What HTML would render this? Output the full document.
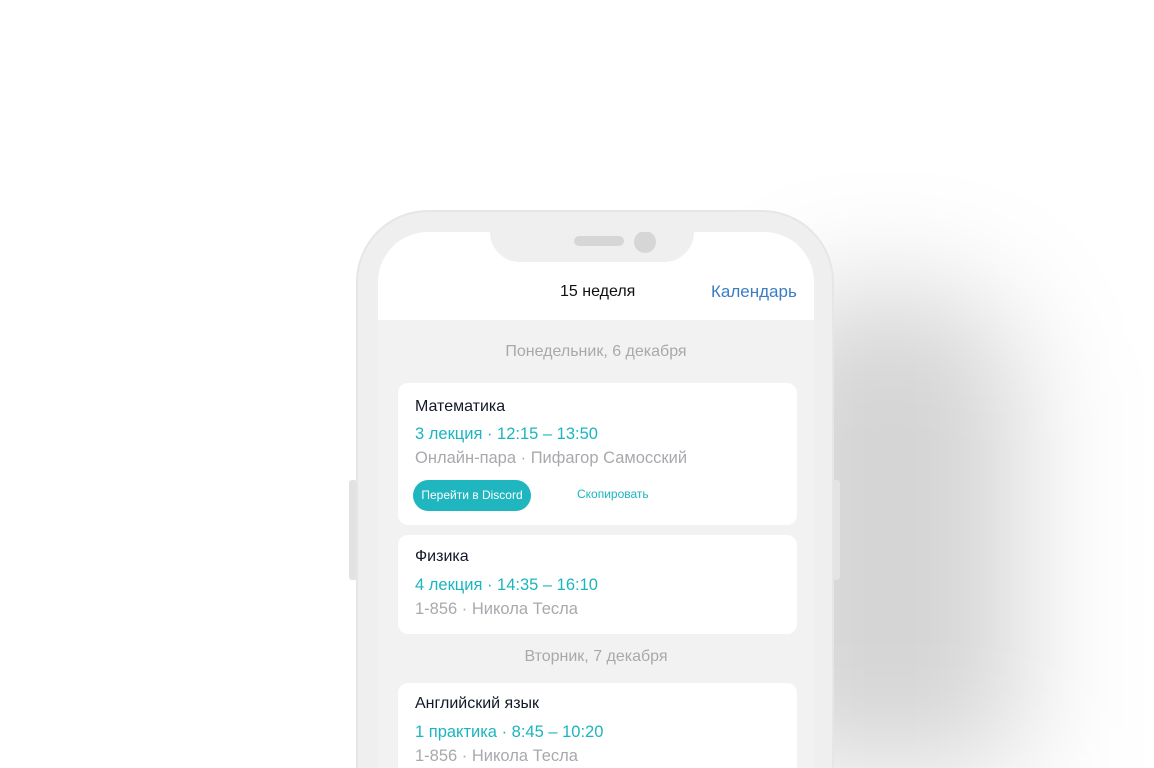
<!DOCTYPE html>
<html><head><meta charset="utf-8"><style>
*{margin:0;padding:0;box-sizing:border-box}
html,body{width:1154px;height:768px;overflow:hidden}
body{background:#fff;position:relative;font-family:"Liberation Sans",sans-serif}
.shadow{position:absolute;left:760px;top:290px;width:260px;height:478px;border-radius:100px 100px 0 0;background:rgba(0,0,0,.17);filter:blur(60px)}
.frame{position:absolute;left:356px;top:210px;width:478px;height:558px;border-radius:72px 72px 0 0;background:#efefef;border:2px solid #e6e6e6;border-bottom:0}
.btnl{position:absolute;left:349px;top:480px;width:8px;height:100px;background:#e2e2e2;border-radius:3px}
.btnr{position:absolute;left:832px;top:480px;width:8px;height:100px;background:#e4e4e4;border-radius:3px}
.screen{position:absolute;left:378px;top:232px;width:436px;height:536px;border-radius:50px 50px 0 0;background:#f2f2f2;overflow:hidden}
.head{position:absolute;left:0;top:0;width:436px;height:88px;background:#fff}
.notch{position:absolute;left:112px;top:-2px;width:204px;height:32px;background:#efefef;border-radius:0 0 30px 30px}
.spk{position:absolute;left:84px;top:6px;width:50px;height:10px;border-radius:5px;background:#d6d6d6}
.cam{position:absolute;left:144px;top:1px;width:22px;height:22px;border-radius:50%;background:#d6d6d6}
.t{position:absolute;white-space:nowrap}
.card{position:absolute;left:20px;width:399px;background:#fff;border-radius:10px}
.n{color:#111827;font-size:16px}
.c{color:#1bb5bf;font-size:16.5px}
.g{color:#a7a9ad;font-size:16.5px}
.d{color:#a7a9ad;font-size:16px;width:436px;text-align:center;left:0}
</style></head><body>
<div class="shadow"></div>
<div class="btnl"></div><div class="btnr"></div>
<div class="frame"></div>
<div class="screen">
 <div class="head">
  <div class="notch"><div class="spk"></div><div class="cam"></div></div>
  <div class="t" style="left:182px;top:51px;font-size:16px;color:#111">15 неделя</div>
  <div class="t" style="left:333px;top:50px;font-size:17px;color:#3b7dc4">Календарь</div>
 </div>
 <div class="t d" style="top:111px">Понедельник, 6 декабря</div>
 <div class="card" style="top:151px;height:142px">
  <div class="t n" style="left:17px;top:15px">Математика</div>
  <div class="t c" style="left:17px;top:42px">3 лекция · 12:15 – 13:50</div>
  <div class="t g" style="left:17px;top:66px">Онлайн-пара · Пифагор Самосский</div>
  <div class="t" style="left:15px;top:97px;width:118px;height:31px;border-radius:16px;background:#1fb6c0;color:#fff;font-size:12px;line-height:31px;text-align:center">Перейти в Discord</div>
  <div class="t" style="left:179px;top:104px;font-size:12px;color:#1bb5bf">Скопировать</div>
 </div>
 <div class="card" style="top:303px;height:99px">
  <div class="t n" style="left:17px;top:13px">Физика</div>
  <div class="t c" style="left:17px;top:41px">4 лекция · 14:35 – 16:10</div>
  <div class="t g" style="left:17px;top:65px">1-856 · Никола Тесла</div>
 </div>
 <div class="t d" style="top:416px">Вторник, 7 декабря</div>
 <div class="card" style="top:451px;height:100px">
  <div class="t n" style="left:17px;top:12px">Английский язык</div>
  <div class="t c" style="left:17px;top:40px">1 практика · 8:45 – 10:20</div>
  <div class="t g" style="left:17px;top:64px">1-856 · Никола Тесла</div>
 </div>
</div>
</body></html>
